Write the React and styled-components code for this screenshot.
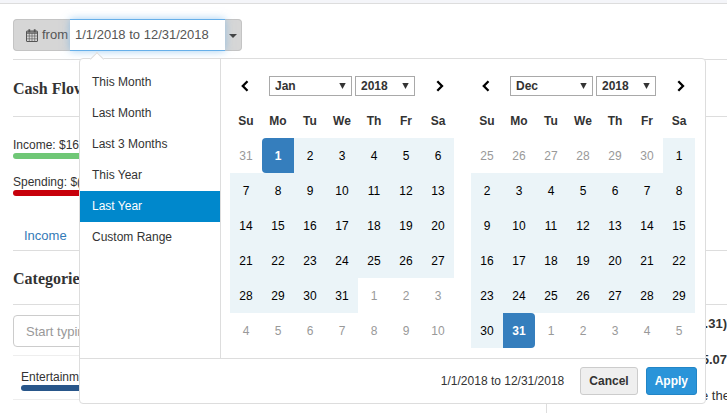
import React, { useState } from 'react';
import styled, { createGlobalStyle, css } from 'styled-components';

const GlobalStyle = createGlobalStyle`
  * {
    box-sizing: border-box;
  }
  html {
    overflow: hidden;
  }
  body {
    margin: 0;
    background: #fff;
    color: #333;
    font: 12px/16px 'Liberation Sans', Arial, sans-serif;
  }
  button,
  input,
  select {
    margin: 0;
    color: inherit;
    font: inherit;
  }
`;

const TopStrip = styled.div`
  height: 4px;
  background: #f4f5f9;
  border-bottom: 1px solid #ddd;
`;

const Page = styled.main`
  padding: 15px 0 0 13px;
`;

const Toolbar = styled.div`
  position: relative;
  display: flex;
  width: fit-content;
  height: 32px;
  margin-bottom: 8px;
`;

const Addon = styled.label`
  display: flex;
  align-items: center;
  gap: 4px;
  width: 57px;
  padding-left: 12px;
  background: #d6d6d6;
  border: 1px solid #c4c4c4;
  border-right: 0;
  border-radius: 4px 0 0 4px;
  color: #555;
  font-size: 13px;
`;

const RangeInput = styled.input`
  width: 155px;
  padding: 0 5px;
  background: #fff;
  border: solid #66afe9;
  border-width: 1px 0;
  box-shadow: 0 0 8px rgba(102, 175, 233, 0.6);
  color: #555;
  font-size: 13px;
  outline: 0;
  z-index: 1;
`;

const CaretButton = styled.button`
  display: flex;
  align-items: center;
  justify-content: center;
  width: 17px;
  padding: 2px 0 0;
  background: #d6d6d6;
  border: 1px solid #c4c4c4;
  border-left: 0;
  border-radius: 0 4px 4px 0;
  color: #444;
`;

const SectionTitle = styled.h2`
  display: flex;
  align-items: center;
  height: ${({ $height }) => $height}px;
  margin: 0;
  padding-top: 2px;
  border: solid #ddd;
  border-width: 1px 0;
  font: bold 16px/20px 'Liberation Serif', 'Times New Roman', serif;
`;

const Columns = styled.div`
  display: grid;
  grid-template-columns: minmax(0, 1fr) 181px;
`;

const Summary = styled.div`
  display: grid;
  gap: 15px;
  padding: 20px 0 25px;
`;

const Bar = styled.div`
  height: 6px;
  background: ${({ $color }) => $color};
  border-radius: 3px;
`;

const Tabs = styled.nav`
  display: flex;
  align-items: center;
  height: 29px;
  padding-left: 11px;
`;

const TabLink = styled.a`
  color: #337ab7;
  font-size: 13px;
  text-decoration: none;
`;

const CategoryList = styled.div`
  padding-top: 10px;
`;

const Search = styled.input`
  display: block;
  width: 100%;
  height: 32px;
  margin-bottom: 8px;
  padding: 0 12px;
  border: 1px solid #ccc;
  border-radius: 4px;
  font-size: 13px;
  &::placeholder {
    color: #999;
  }
`;

const Category = styled.div`
  padding: 13px 8px 8px;
  border: solid #eee;
  border-width: 1px 0;
`;

const Totals = styled.aside`
  display: flex;
  justify-content: flex-end;
  min-height: 120px;
  border-left: 1px solid #ddd;
  overflow: hidden;
`;

const TotalLines = styled.div`
  display: grid;
  grid-template-columns: minmax(0, 1fr);
  align-content: start;
  gap: 20px;
  width: 26px;
  padding-top: 11px;
  font-size: 13px;
  white-space: nowrap;
  strong {
    text-align: right;
  }
`;

const Popup = styled.section`
  position: absolute;
  top: 39px;
  left: 66px;
  width: max-content;
  background: #fff;
  border: 1px solid #ddd;
  border-radius: 4px;
  z-index: 2;
  &::before {
    content: '';
    position: absolute;
    top: -5px;
    left: 12px;
    width: 9px;
    height: 9px;
    background: #fff;
    border: solid #ddd;
    border-width: 1px 0 0 1px;
    transform: rotate(45deg);
  }
`;

const PopupBody = styled.div`
  display: flex;
`;

const RangeList = styled.ul`
  width: 141px;
  margin: 0;
  padding: 8px 0;
  border-right: 1px solid #ddd;
  list-style: none;
`;

const RangeButton = styled.button`
  display: block;
  width: 100%;
  height: 31px;
  padding: 0 12px 2px;
  background: ${({ $active }) => ($active ? '#08c' : 'transparent')};
  border: 0;
  color: ${({ $active }) => ($active ? '#fff' : '#333')};
  text-align: left;
`;

const Calendars = styled.div`
  display: flex;
  gap: 17px;
  padding: 9px 10px 10px 9px;
`;

const MonthTable = styled.table`
  border-collapse: collapse;
  text-align: center;
  th,
  td {
    width: 32px;
    height: 35px;
    padding: 0;
  }
`;

const ArrowButton = styled.button`
  display: flex;
  align-items: center;
  justify-content: center;
  width: 32px;
  height: 28px;
  padding: 0;
  background: transparent;
  border: 0;
  color: #000;
`;

const Selects = styled.div`
  display: flex;
  justify-content: center;
  gap: 3px;
`;

const SelectBox = styled.div`
  position: relative;
  width: ${({ $width }) => $width}px;
  select {
    display: block;
    appearance: none;
    width: 100%;
    height: 20px;
    padding: 0 5px;
    background: #fff;
    border: 1px solid #a9a9a9;
    border-radius: 0;
  }
  svg {
    position: absolute;
    top: 7px;
    right: 6px;
    pointer-events: none;
  }
`;

const dayStates = {
  off: css`
    color: #999;
  `,
  range: css`
    background: #ebf4f8;
    color: #000;
  `,
  start: css`
    background: #357ebd;
    border-radius: 4px 0 0 4px;
    color: #fff;
    font-weight: bold;
  `,
  end: css`
    background: #357ebd;
    border-radius: 0 4px 4px 0;
    color: #fff;
    font-weight: bold;
  `,
};

const DayButton = styled.button`
  display: block;
  width: 100%;
  height: 35px;
  padding: 0;
  background: transparent;
  border: 0;
  ${({ $state }) => dayStates[$state]}
`;

const PopupFooter = styled.footer`
  display: flex;
  align-items: center;
  justify-content: flex-end;
  gap: 8px;
  height: 45px;
  padding: 0 8px;
  border-top: 1px solid #ddd;
`;

const SelectedRange = styled.span`
  margin-right: 8px;
`;

const ActionButton = styled.button`
  height: 28px;
  padding: 0 8px;
  background: ${({ $primary }) => ($primary ? '#2a94d9' : '#efefef')};
  border: 1px solid ${({ $primary }) => ($primary ? '#2285c6' : '#ccc')};
  border-radius: 3px;
  color: ${({ $primary }) => ($primary ? '#fff' : '#333')};
  font-weight: bold;
`;

const RANGES = ['This Month', 'Last Month', 'Last 3 Months', 'This Year', 'Last Year', 'Custom Range'];
const MONTHS = ['Jan', 'Feb', 'Mar', 'Apr', 'May', 'Jun', 'Jul', 'Aug', 'Sep', 'Oct', 'Nov', 'Dec'];
const WEEKDAYS = ['Su', 'Mo', 'Tu', 'We', 'Th', 'Fr', 'Sa'];

const START = new Date(2018, 0, 1);
const END = new Date(2018, 11, 31);

const getWeeks = (year, month) => {
  // a month that opens on Sunday still shows the last week of the one before
  const lead = new Date(year, month, 1).getDay() || 7;
  return [0, 1, 2, 3, 4, 5].map(week =>
    WEEKDAYS.map((_, day) => new Date(year, month, 1 - lead + week * 7 + day))
  );
};

const getState = (date, month) => {
  if (date.getMonth() !== month) return 'off';
  if (date.getTime() === START.getTime()) return 'start';
  if (date.getTime() === END.getTime()) return 'end';
  return 'range';
};

const IconCalendar = () => (
  <svg width="12" height="13" viewBox="0 0 12 13" fill="none" stroke="currentColor" aria-hidden="true">
    <rect x="0.5" y="2" width="11" height="10.5" rx="0.5" />
    <path d="M0.5 3H11.5M0.5 4.2H11.5" />
    <path d="M3.3 4V12.5M6 4V12.5M8.7 4V12.5M0.5 7H11.5M0.5 9.8H11.5" strokeWidth="0.6" />
    <path d="M3.3 0.3V3.2M8.7 0.3V3.2" strokeWidth="1.8" />
  </svg>
);

const IconCaret = () => (
  <svg width="8" height="4" viewBox="0 0 8 4" fill="currentColor" aria-hidden="true">
    <path d="M0 0H8L4 4Z" />
  </svg>
);

const IconTriangle = () => (
  <svg width="7" height="6" viewBox="0 0 7 6" fill="currentColor" aria-hidden="true">
    <path d="M0.3 0H6.7L3.5 6Z" />
  </svg>
);

const IconChevron = ({ next }) => (
  <svg width="12" height="12" viewBox="0 0 12 12" fill="none" stroke="currentColor" strokeWidth="2.3" aria-hidden="true">
    <path d={next ? 'M5.3 1.3L10 6L5.3 10.7' : 'M7.5 1.3L2.8 6L7.5 10.7'} />
  </svg>
);

const Calendar = ({ year, month }) => (
  <MonthTable>
    <thead>
      <tr>
        <th>
          <ArrowButton type="button" aria-label="Previous month">
            <IconChevron />
          </ArrowButton>
        </th>
        <th colSpan={5}>
          <Selects>
            <SelectBox $width={83}>
              <select aria-label="Month" defaultValue={MONTHS[month]}>
                {MONTHS.map(name => (
                  <option key={name}>{name}</option>
                ))}
              </select>
              <IconTriangle />
            </SelectBox>
            <SelectBox $width={60}>
              <select aria-label="Year" defaultValue={year}>
                {[year - 1, year, year + 1].map(value => (
                  <option key={value}>{value}</option>
                ))}
              </select>
              <IconTriangle />
            </SelectBox>
          </Selects>
        </th>
        <th>
          <ArrowButton type="button" aria-label="Next month">
            <IconChevron next />
          </ArrowButton>
        </th>
      </tr>
      <tr>
        {WEEKDAYS.map(name => (
          <th key={name}>{name}</th>
        ))}
      </tr>
    </thead>
    <tbody>
      {getWeeks(year, month).map(week => (
        <tr key={week[0].getTime()}>
          {week.map(date => (
            <td key={date.getTime()}>
              <DayButton type="button" $state={getState(date, month)}>
                {date.getDate()}
              </DayButton>
            </td>
          ))}
        </tr>
      ))}
    </tbody>
  </MonthTable>
);

const RangePicker = () => {
  const [range, setRange] = useState('Last Year');
  return (
    <Popup aria-label="Date range">
      <PopupBody>
        <RangeList>
          {RANGES.map(name => (
            <li key={name}>
              <RangeButton type="button" $active={name === range} onClick={() => setRange(name)}>
                {name}
              </RangeButton>
            </li>
          ))}
        </RangeList>
        <Calendars>
          <Calendar year={2018} month={0} />
          <Calendar year={2018} month={11} />
        </Calendars>
      </PopupBody>
      <PopupFooter>
        <SelectedRange>1/1/2018 to 12/31/2018</SelectedRange>
        <ActionButton type="button">Cancel</ActionButton>
        <ActionButton type="button" $primary>
          Apply
        </ActionButton>
      </PopupFooter>
    </Popup>
  );
};

const App = () => (
  <>
    <GlobalStyle />
    <TopStrip />
    <Page>
      <Toolbar>
        <Addon htmlFor="range">
          <IconCalendar />
          from
        </Addon>
        <RangeInput id="range" defaultValue="1/1/2018 to 12/31/2018" />
        <CaretButton type="button" aria-label="Open date range">
          <IconCaret />
        </CaretButton>
        <RangePicker />
      </Toolbar>
      <SectionTitle $height={58}>Cash Flow</SectionTitle>
      <Columns>
        <Summary>
          <div>
            Income: $16
            <Bar $color="#6fc776" />
          </div>
          <div>
            Spending: $(
            <Bar $color="#c7000b" />
          </div>
        </Summary>
      </Columns>
      <Tabs>
        <TabLink href="#income">Income</TabLink>
      </Tabs>
      <SectionTitle $height={55}>Categories</SectionTitle>
      <Columns>
        <CategoryList>
          <Search aria-label="Search categories" placeholder="Start typing" />
          <Category>
            Entertainment
            <Bar $color="#28568a" />
          </Category>
        </CategoryList>
        <Totals>
          <TotalLines>
            <strong>.31)</strong>
            <strong>5.07</strong>
            <span>e the</span>
          </TotalLines>
        </Totals>
      </Columns>
    </Page>
  </>
);

export default App;
